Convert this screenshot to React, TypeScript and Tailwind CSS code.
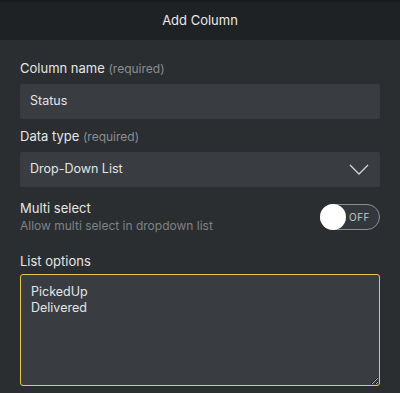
export default function App() {
  return (
    <div className="w-[400px] h-[393px] bg-[#2b2e31] text-[#e4e5e7] overflow-hidden" style={{ fontFamily: 'Inter, "Noto Sans", sans-serif' }}>
      {/* Header */}
      <div className="h-[40px] bg-[#1f2225] border-t-2 border-[#17191b] flex items-center justify-center text-[13px] text-[#e8e9ea]">
        Add Column
      </div>

      <div className="px-5 pt-[19px] flex flex-col">
        <div className="text-[13px] leading-[18px]">
          Column name <span className="text-[12px] text-[#8a8d91]">(required)</span>
        </div>
        <div className="mt-[6px] h-[35px] bg-[#393c41] rounded-[2px] flex items-center px-[10px] text-[12.5px]">
          Status
        </div>

        <div className="mt-[8px] text-[13px] leading-[18px]">
          Data type <span className="text-[12px] text-[#8a8d91]">(required)</span>
        </div>
        <div className="mt-[6px] h-[35px] bg-[#393c41] rounded-[2px] flex items-center justify-between pl-[10px] pr-[10px] text-[12.5px]">
          <span>Drop-Down List</span>
          <svg width="20" height="11" viewBox="0 0 20 11" fill="none" className="mr-[1px]">
            <path d="M1 1 L10 10 L19 1" stroke="#d4d5d7" strokeWidth="1.3" />
          </svg>
        </div>

        <div className="mt-[12px] flex items-center justify-between">
          <div className="flex flex-col">
            <span className="text-[13px] leading-[18px]">Multi select</span>
            <span className="text-[12px] leading-[18px] text-[#7f8286]">Allow multi select in dropdown list</span>
          </div>
          <div className="relative w-[60px] h-[26px] rounded-full border border-[#8c8f93] bg-[#34373b] flex items-center justify-end pr-[9px]">
            <div className="absolute left-[-1px] top-[-1px] w-[26px] h-[26px] rounded-full bg-white" />
            <span className="text-[10px] tracking-[0.5px] text-[#c9cacc]">OFF</span>
          </div>
        </div>

        <div className="mt-[17px] text-[13px] leading-[18px]">List options</div>
        <textarea
          className="mt-[4px] h-[112px] w-full bg-[#393c41] border border-[#e9c54a] rounded-[3px] px-[10px] py-[9px] text-[12.5px] leading-[16px] text-[#e4e5e7] outline-none resize"
          defaultValue={'PickedUp\nDelivered'}
        />
      </div>
    </div>
  );
}
